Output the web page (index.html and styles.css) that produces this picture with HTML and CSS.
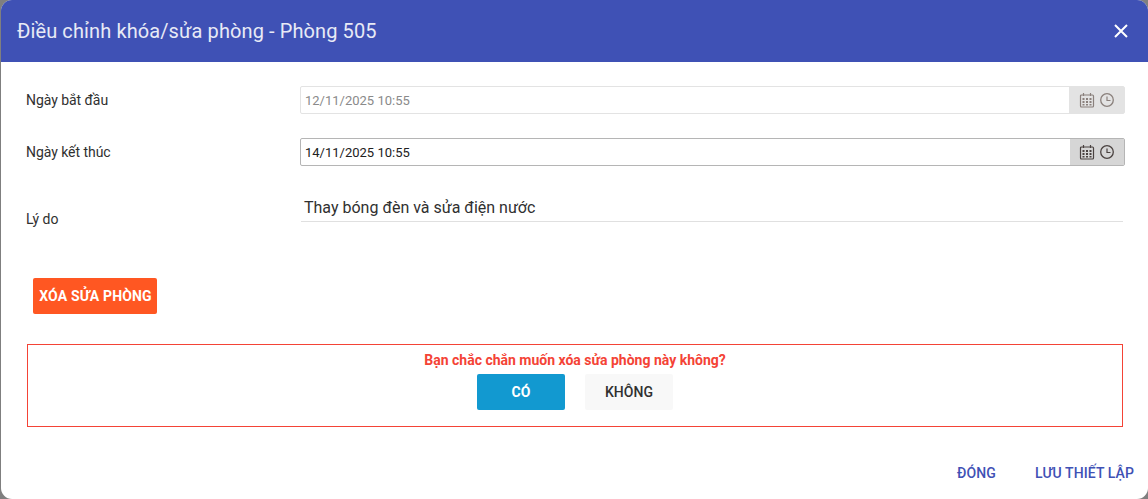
FILE: index.html
```html
<!DOCTYPE html>
<html lang="vi">
<head>
<meta charset="utf-8">
<title>Điều chỉnh khóa/sửa phòng</title>
<link rel="stylesheet" href="styles.css">
</head>
<body>
<div class="modal">
  <header class="head">
    <h1 class="title">Điều chỉnh khóa/sửa phòng - Phòng 505</h1>
    <svg class="close" width="16" height="16" viewBox="0 0 16 16"><path d="M2 2L14 14M14 2L2 14" stroke="#fff" stroke-width="2" fill="none"/></svg>
  </header>
  <main class="body">
    <div class="row">
      <label class="label">Ngày bắt đầu</label>
      <div class="picker disabled">
        <span class="value">12/11/2025 10:55</span>
        <span class="addon">
          <svg class="ico" width="16" height="16" viewBox="0 0 16 16"><use href="#cal"/></svg>
          <svg class="ico" width="16" height="16" viewBox="0 0 16 16"><use href="#clk"/></svg>
        </span>
      </div>
    </div>
    <div class="row second">
      <label class="label">Ngày kết thúc</label>
      <div class="picker">
        <span class="value">14/11/2025 10:55</span>
        <span class="addon">
          <svg class="ico" width="16" height="16" viewBox="0 0 16 16"><use href="#cal"/></svg>
          <svg class="ico" width="16" height="16" viewBox="0 0 16 16"><use href="#clk"/></svg>
        </span>
      </div>
    </div>
    <div class="reason">
      <label class="label">Lý do</label>
      <div class="reason-field">Thay bóng đèn và sửa điện nước</div>
    </div>
    <button class="btn-delete">XÓA SỬA PHÒNG</button>
    <section class="confirm">
      <p class="question">Bạn chắc chắn muốn xóa sửa phòng này không?</p>
      <div class="actions">
        <button class="btn btn-yes">CÓ</button>
        <button class="btn btn-no">KHÔNG</button>
      </div>
    </section>
  </main>
  <footer class="foot">
    <button class="link">ĐÓNG</button>
    <button class="link">LƯU THIẾT LẬP</button>
  </footer>
</div>
<svg class="defs" width="0" height="0">
  <defs>
    <g id="cal">
      <path d="M2.5 3h11a1 1 0 0 1 1 1v10a1 1 0 0 1-1 1h-11a1 1 0 0 1-1-1V4a1 1 0 0 1 1-1z" fill="none" stroke="currentColor" stroke-width="1.2"/>
      <path d="M4.5 1v3M11.5 1v3" stroke="currentColor" stroke-width="1.2"/>
      <path d="M3.500 6h2v2h-2zM7 6h2v2H7zM10.500 6h2v2h-2zM3.500 9h2v2h-2zM7 9h2v2H7zM10.500 9h2v2h-2zM3.500 12h2v1.500h-2zM7 12h2v1.500H7zM10.500 12h2v1.500h-2z" fill="currentColor"/>
    </g>
    <g id="clk">
      <circle cx="8" cy="8" r="6.300" fill="none" stroke="currentColor" stroke-width="1.300"/>
      <path d="M8 4.500V8.500H11.500" fill="none" stroke="currentColor" stroke-width="1.200"/>
    </g>
  </defs>
</svg>
</body>
</html>
```
FILE: styles.css
```css
* { box-sizing: border-box; }
html, body { margin: 0; height: 100%; }
body {
  background: #7f7f7f;
  font-family: Roboto, "Liberation Sans", sans-serif;
  overflow: hidden;
  padding-left: 1px;
}
.modal {
  width: 1147px;
  height: 499px;
  background: #fff;
  border-radius: 11px;
  overflow: hidden;
  display: flex;
  flex-direction: column;
}
.head {
  height: 62px;
  flex: none;
  background: #3f51b5;
  color: #fff;
  display: flex;
  align-items: center;
  justify-content: space-between;
  padding: 0 19px 0 16px;
}
.title {
  margin: 0;
  font-size: 20px;
  font-weight: 400;
  color: #e8eaf6;
  letter-spacing: 0.1px;
}
.body {
  flex: 1;
  padding: 24px 25px 0 25px;
}
.row {
  display: grid;
  grid-template-columns: 274px 825px;
  align-items: center;
  height: 28px;
}
.second { margin-top: 24px; }
.label { font-size: 14px; color: #303030; letter-spacing: -0.05px; }
.picker {
  height: 28px;
  display: flex;
  align-items: stretch;
  border: 1px solid #b5b5b5;
  border-radius: 2px;
  font-size: 13px;
  color: #212121;
}
.picker.disabled { border-color: #e3e3e3; color: #8a8a8a; }
.value { flex: 1; display: flex; align-items: center; padding-left: 4px; }
.addon {
  width: 54px;
  background: #d6d6d6;
  display: flex;
  align-items: center;
  justify-content: center;
  gap: 4px;
  color: #4a4240;
}
.disabled .addon { width: 55px; background: #e3e3e3; color: #8a807c; }
.ico { display: block; }
.reason {
  display: grid;
  grid-template-columns: 275px 822px;
  grid-template-rows: 30px;
  margin-top: 26px;
  height: 86px;
}
.reason .label { align-self: start; line-height: 16px; margin-top: 19px; }
.reason-field {
  height: 30px;
  border-bottom: 1px solid #e0e0e0;
  font-size: 16px;
  line-height: 31px;
  padding-left: 3px;
  color: #303030;
}
.btn-delete {
  display: block;
  margin: 0 0 0 7px;
  width: 124px;
  height: 36px;
  border: 0;
  border-radius: 2px;
  background: #ff5722;
  color: #fff;
  font: 700 14px Roboto, "Liberation Sans", sans-serif;
  letter-spacing: 0.15px;
  padding: 0 0 0 1px;
}
.confirm {
  margin: 30px 0 0 1px;
  width: 1096px;
  height: 83px;
  border: 1px solid #f44336;
  text-align: center;
}
.question {
  margin: 7px 0 0;
  font-size: 14px;
  font-weight: 700;
  line-height: 16px;
  color: #f44336;
}
.actions {
  display: flex;
  justify-content: center;
  gap: 20px;
  margin-top: 6px;
}
.btn {
  width: 88px;
  height: 36px;
  border: 0;
  border-radius: 2px;
  font: 500 14px Roboto, "Liberation Sans", sans-serif;
  padding: 0;
}
.btn-yes { background: #1299d0; color: #fff; font-weight: 700; }
.btn-no { background: #f8f8f8; color: #303030; letter-spacing: 0.05px; }
.foot {
  height: 42px;
  flex: none;
  display: flex;
  justify-content: flex-end;
  gap: 39px;
  padding: 0 14px 0 0;
  align-items: flex-start;
}
.link {
  border: 0;
  background: none;
  padding: 0;
  height: 32px;
  color: #3f51b5;
  font: 500 14px/32px Roboto, "Liberation Sans", sans-serif;
  letter-spacing: 0.1px;
}
.defs { position: absolute; }
```
